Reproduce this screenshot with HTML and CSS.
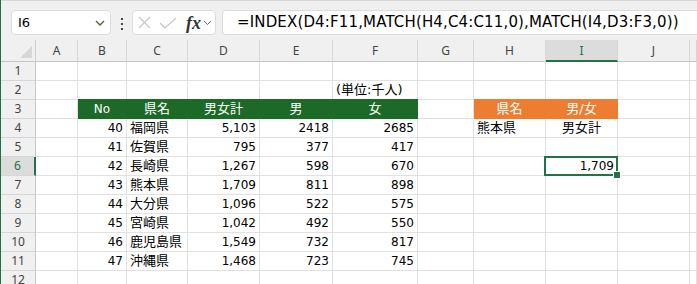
FILE: index.html
```html
<!DOCTYPE html>
<html lang="ja">
<head>
  <meta charset="UTF-8" />
  <title>INDEX MATCH</title>
  <link rel="stylesheet" href="styles.css">
</head>
<body>
  <!-- Formula bar -->
  <div class="toolbar">
    <div class="name-box">
      <span>I6</span>
      <svg class="chevron" width="10" height="6" viewBox="0 0 10 6"><path d="M1 1 L5 5 L9 1" fill="none" stroke="#5a5a38" stroke-width="1.3"/></svg>
    </div>
    <div class="dots"><span></span><span></span><span></span></div>
    <div class="fx-box">
      <svg class="icon-x" width="13" height="13" viewBox="0 0 13 13"><path d="M1 1 L12 12 M12 1 L1 12" stroke="#c6c6c6" stroke-width="1.2"/></svg>
      <svg class="icon-check" width="18" height="12" viewBox="0 0 18 12"><path d="M1 6 L6 11 L17 1" fill="none" stroke="#c6c6c6" stroke-width="1.2"/></svg>
      <span class="fx">fx</span>
      <svg width="9" height="6" viewBox="0 0 9 6"><path d="M1 1 L4.5 4.5 L8 1" fill="none" stroke="#666" stroke-width="1"/></svg>
    </div>
    <div class="formula">=INDEX(D4:F11,MATCH(H4,C4:C11,0),MATCH(I4,D3:F3,0))</div>
  </div>

  <!-- Sheet -->
  <div class="sheet" id="sheet"></div>

  <script>
    const letters = ['A', 'B', 'C', 'D', 'E', 'F', 'G', 'H', 'I', 'J', ''];

    const prefs = [
      [40, '福岡県', '5,103', 2418, 2685],
      [41, '佐賀県', '795', 377, 417],
      [42, '長崎県', '1,267', 598, 670],
      [43, '熊本県', '1,709', 811, 898],
      [44, '大分県', '1,096', 522, 575],
      [45, '宮崎県', '1,042', 492, 550],
      [46, '鹿児島県', '1,549', 732, 817],
      [47, '沖縄県', '1,468', 723, 745],
    ];

    // cells keyed by "row-col", col index 0 = A
    const cells = {
      '2-5': {t: '(単位:千人)', c: 'jp'},
      '3-1': {t: 'No', c: 'green'},
      '3-2': {t: '県名', c: 'green jp'},
      '3-3': {t: '男女計', c: 'green jp'},
      '3-4': {t: '男', c: 'green jp'},
      '3-5': {t: '女', c: 'green jp'},
      '3-7': {t: '県名', c: 'orange jp'},
      '3-8': {t: '男/女', c: 'orange jp'},
      '4-7': {t: '熊本県', c: 'jp'},
      '4-8': {t: '男女計', c: 'jp center'},
      '6-8': {t: '1,709', c: 'num active'},
    };

    prefs.forEach((p, i) => {
      const r = i + 4;
      cells[`${r}-1`] = {t: p[0], c: 'num'};
      cells[`${r}-2`] = {t: p[1], c: 'jp'};
      cells[`${r}-3`] = {t: p[2], c: 'num'};
      cells[`${r}-4`] = {t: p[3], c: 'num'};
      cells[`${r}-5`] = {t: p[4], c: 'num'};
    });

    function div(className, text) {
      const d = document.createElement('div');
      d.className = className;
      if (text !== undefined) d.textContent = text;
      return d;
    }

    const sheet = document.getElementById('sheet');

    const corner = div('corner');
    corner.appendChild(div('triangle'));
    sheet.appendChild(corner);
    letters.forEach(l => sheet.appendChild(div(l === 'I' ? 'col-head selected' : 'col-head', l)));

    for (let r = 1; r <= 12; r++) {
      sheet.appendChild(div(r === 6 ? 'row-head selected' : 'row-head', r));
      letters.forEach((l, c) => {
        const cell = cells[`${r}-${c}`];
        sheet.appendChild(cell ? div(`cell ${cell.c}`, cell.t) : div('cell'));
      });
    }
  </script>
</body>
</html>
```

FILE: styles.css
```css
/* Base */
body {
  margin: 0;
  height: 284px;
  overflow: hidden;
  box-sizing: border-box;
  border-left: 1px solid #217346;
  background: #fff;
  color: #000;
  font-family: "DejaVu Sans", "Noto Sans CJK JP", sans-serif;
}

/* Formula bar */
.toolbar {
  display: flex;
  align-items: flex-start;
  height: 40px;
  box-sizing: border-box;
  padding: 9px 0 0 10px;
  border-top: 1px solid #d6d6d6;
  background: #f0f0f0;
}

.name-box {
  display: flex;
  align-items: center;
  justify-content: space-between;
  width: 100px;
  height: 25px;
  box-sizing: border-box;
  padding: 0 5px 0 6px;
  background: #fff;
  border: 1px solid #dcdcdc;
  border-radius: 4px;
  font-size: 13px;
}

.dots {
  display: flex;
  flex-direction: column;
  gap: 3px;
  margin: 8px 9px 0 10px;
}

.dots span {
  width: 2px;
  height: 2px;
  background: #444;
}

.fx-box {
  display: flex;
  align-items: center;
  width: 84px;
  height: 25px;
  box-sizing: border-box;
  padding: 0 0 0 5px;
  background: #fff;
  border: 1px solid #dcdcdc;
  border-radius: 4px;
}

.icon-x     { margin-right: 8px; }
.icon-check { margin-right: 9px; }

.fx {
  font-family: "Liberation Serif", serif;
  font-style: italic;
  font-weight: bold;
  font-size: 18px;
  line-height: 20px;
  color: #333;
  margin-right: 2px;
}

.formula {
  flex: 1;
  height: 25px;
  box-sizing: border-box;
  margin-left: 6px;
  padding-left: 14px;
  line-height: 23px;
  background: #fff;
  border: 1px solid #dcdcdc;
  border-right: none;
  border-radius: 4px 0 0 4px;
  font-size: 15px;
  letter-spacing: 0.15px;
  white-space: nowrap;
}

/* Sheet grid */
.sheet {
  display: grid;
  grid-template-columns: 35px 42px 49px 61px 72px 73px 85px 56px 72px 72px 72px 1fr;
  grid-template-rows: 22px;
  grid-auto-rows: 19px;
}

.sheet > div {
  box-sizing: border-box;
  white-space: nowrap;
}

.corner {
  display: flex;
  justify-content: flex-end;
  align-items: flex-end;
  padding: 0 3px 3px 0;
  background: #f0f0f0;
  border-right: 1px solid #d0d0d0;
  border-bottom: 1px solid #c6c6c6;
}

.triangle {
  width: 0;
  height: 0;
  border-left: 12px solid transparent;
  border-bottom: 12px solid #d6d6d6;
}

.col-head {
  background: #f0f0f0;
  border-right: 1px solid #d6d6d6;
  border-bottom: 1px solid #c6c6c6;
  color: #444;
  font-family: "Noto Sans", sans-serif;
  font-size: 12px;
  line-height: 22px;
  text-align: center;
}

.row-head {
  background: #f0f0f0;
  border-right: 1px solid #c6c6c6;
  border-bottom: 1px solid #d6d6d6;
  color: #444;
  font-family: "Noto Sans", sans-serif;
  font-size: 12px;
  line-height: 18px;
  text-align: center;
}

.col-head.selected {
  background: #dcdcdc;
  border-bottom: 2px solid #217346;
  color: #217346;
}

.row-head.selected {
  background: #dcdcdc;
  border-right: 2px solid #217346;
  color: #217346;
}

/* Cells */
.cell {
  padding: 0 3px;
  border-right: 1px solid #e1e1e1;
  border-bottom: 1px solid #e1e1e1;
  font-size: 12px;
  line-height: 18px;
}

.num    { text-align: right; }
.center { text-align: center; }
.jp     { font-size: 13px; }

.green {
  background: #1d6a28;
  border-color: #1d6a28;
  box-shadow: 0 -1px 0 #1d6a28;
  color: #fff;
  text-align: center;
}

.orange {
  background: #ed7d31;
  border-color: #ed7d31;
  box-shadow: 0 -1px 0 #ed7d31;
  color: #fff;
  text-align: center;
}

/* Active cell */
.active {
  position: relative;
  z-index: 1;
}

.active::after {
  content: "";
  position: absolute;
  left: -2px;
  top: -1px;
  right: -1px;
  bottom: -1px;
  border: 2px solid #217346;
}

.active::before {
  content: "";
  position: absolute;
  right: -4px;
  bottom: -4px;
  width: 6px;
  height: 6px;
  background: #217346;
  border: 1px solid #fff;
  z-index: 2;
}
```
